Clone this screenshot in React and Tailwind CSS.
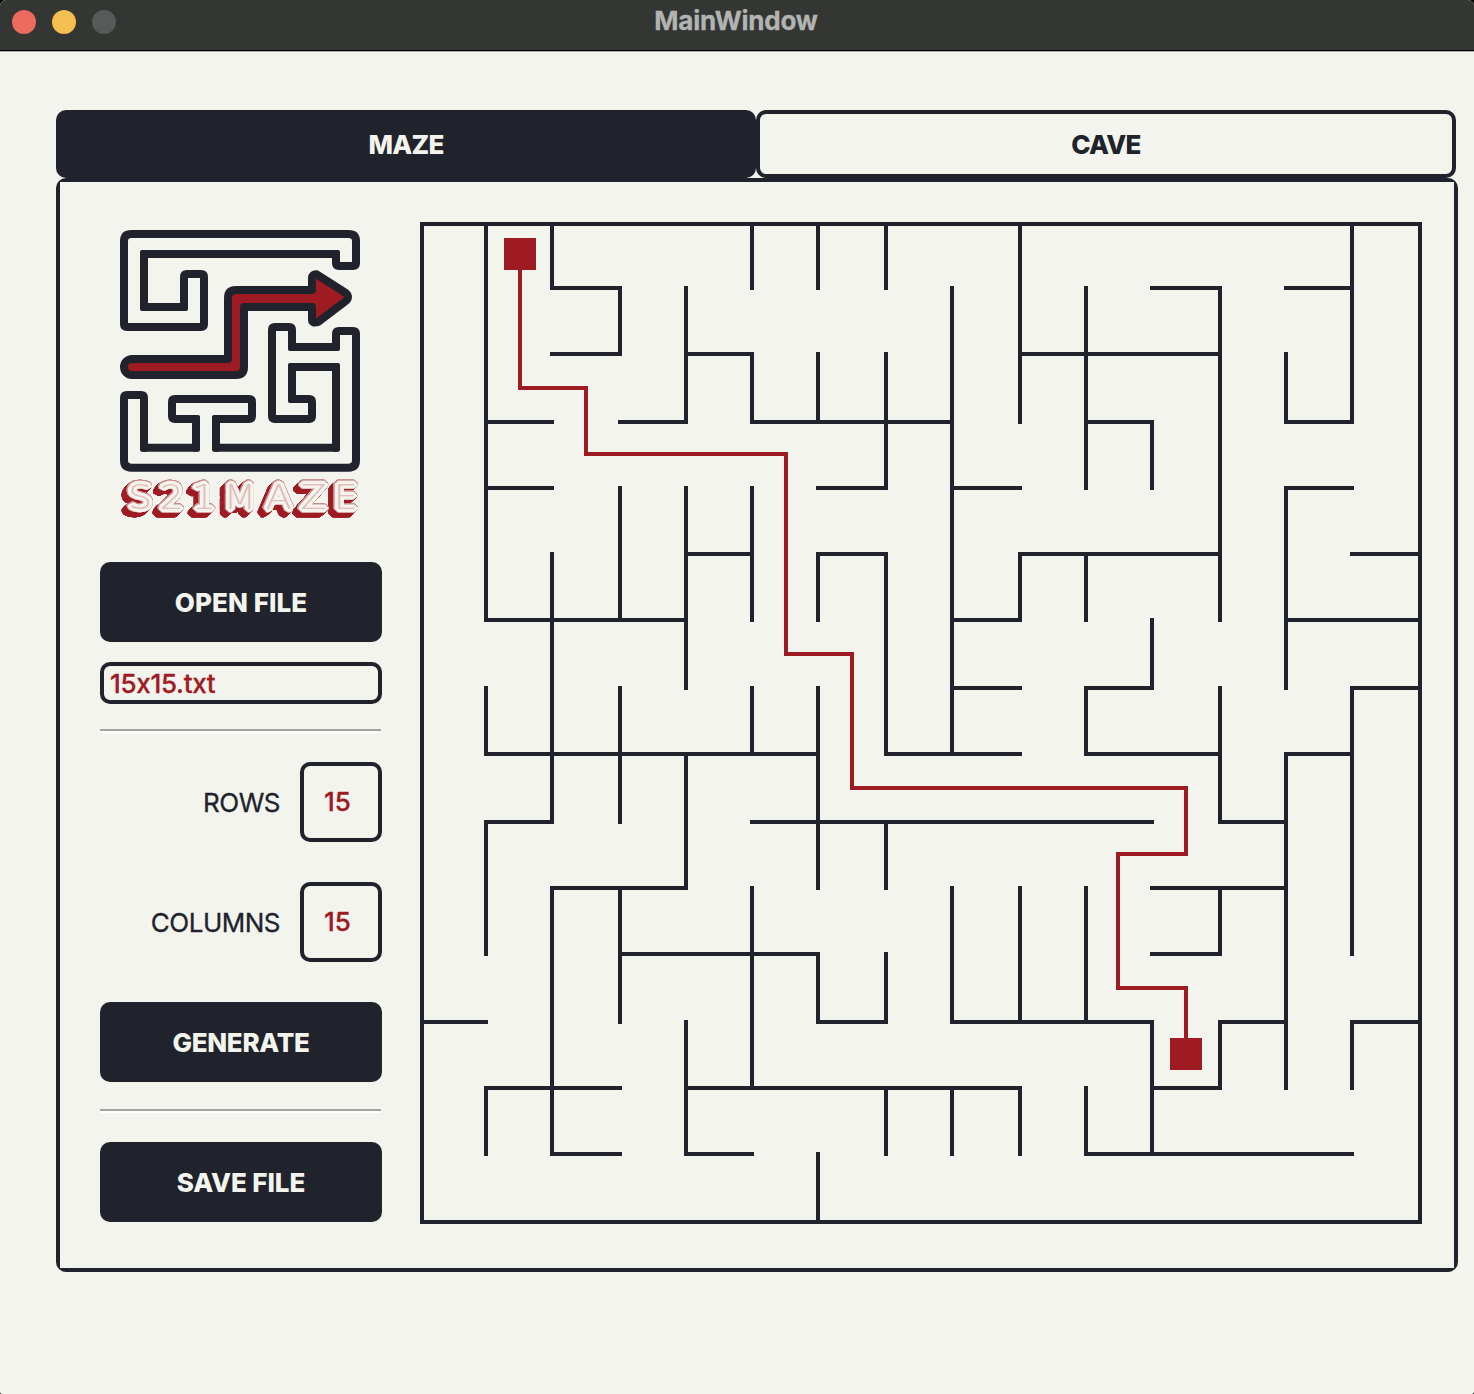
import React from "react";

const COLS = [2, 66, 132, 200, 266, 332, 398, 466, 532, 600, 666, 732, 800, 866, 932, 1000];
const ROWS = [2, 66, 132, 200, 266, 332, 398, 466, 532, 600, 666, 732, 800, 866, 932, 1000];

// For every column line: [from row, to row]
const VERTICAL = [
  [[0, 15]],
  [[0, 6], [7, 8], [9, 11], [13, 14]],
  [[0, 1], [5, 9], [10, 14]],
  [[1, 2], [4, 6], [7, 9], [10, 12]],
  [[1, 3], [4, 7], [8, 10], [12, 14]],
  [[0, 1], [2, 3], [4, 6], [7, 8], [10, 13]],
  [[0, 1], [2, 3], [5, 6], [7, 10], [11, 12], [14, 15]],
  [[0, 1], [2, 4], [5, 8], [9, 10], [11, 12], [13, 14]],
  [[1, 8], [10, 12], [13, 14]],
  [[0, 3], [5, 6], [10, 12], [13, 14]],
  [[1, 4], [5, 6], [7, 8], [10, 12], [13, 14]],
  [[3, 4], [6, 7], [12, 14]],
  [[1, 6], [7, 9], [10, 11], [12, 13]],
  [[2, 3], [4, 7], [8, 13]],
  [[0, 3], [7, 11], [12, 13]],
  [[0, 15]],
];

// For every row line: [from column, to column]
const HORIZONTAL = [
  [[0, 15]],
  [[2, 3], [11, 12], [13, 14]],
  [[2, 3], [4, 5], [9, 12]],
  [[1, 2], [3, 4], [5, 8], [10, 11], [13, 14]],
  [[1, 2], [6, 7], [8, 9], [13, 14]],
  [[4, 5], [6, 7], [9, 12], [14, 15]],
  [[1, 4], [8, 9], [13, 15]],
  [[8, 9], [10, 11], [14, 15]],
  [[1, 6], [7, 9], [10, 12], [13, 14]],
  [[1, 2], [5, 11], [12, 13]],
  [[2, 4], [11, 13]],
  [[3, 6], [11, 12]],
  [[0, 1], [6, 7], [8, 11], [12, 13], [14, 15]],
  [[1, 3], [4, 9], [11, 12]],
  [[2, 3], [4, 5], [10, 14]],
  [[0, 15]],
];

const wallPath =
  VERTICAL.map((runs, i) => runs.map(([a, b]) => `M${COLS[i]} ${ROWS[a]}V${ROWS[b]}`).join("")).join("") +
  HORIZONTAL.map((runs, i) => runs.map(([a, b]) => `M${COLS[a]} ${ROWS[i]}H${COLS[b]}`).join("")).join("");

function Maze() {
  return (
    <svg width="1002" height="1002" viewBox="0 0 1002 1002" className="block shrink-0" shapeRendering="crispEdges">
      <path d={wallPath} fill="none" stroke="#20232b" strokeWidth="4" strokeLinecap="square" />
      <path
        d="M100 32V166H166V232H366V432H432V566H766V632H698V766H766V832"
        fill="none"
        stroke="#9e1b24"
        strokeWidth="4"
      />
      <rect x="84" y="16" width="32" height="32" fill="#9e1b24" />
      <rect x="750" y="816" width="32" height="32" fill="#9e1b24" />
    </svg>
  );
}

// Logo outlines as closed loops of [x, y, corner radius]; radius 0 marks a tight inner corner.
const UPPER_LOOP = [
  [132, 102, 0], [708, 102, 0], [708, 138, 9], [768, 138, 9], [768, 42, 22], [72, 42, 22],
  [72, 321, 9], [312, 321, 9], [312, 162, 9], [252, 162, 9], [252, 261, 0], [132, 261, 0],
];
const LOWER_LOOP = [
  [708, 333, 9], [768, 333, 9], [768, 743, 22], [72, 743, 22], [72, 525, 9], [132, 525, 9],
  [132, 683, 0], [288, 683, 0], [288, 597, 0], [216, 597, 9], [216, 537, 9], [456, 537, 9],
  [456, 597, 9], [348, 597, 0], [348, 683, 0], [708, 683, 0], [708, 441, 0], [576, 441, 0],
  [576, 537, 0], [636, 537, 9], [636, 597, 9], [516, 597, 9], [516, 321, 9], [576, 321, 9],
  [576, 381, 0], [708, 381, 0],
];

function loopPath(points) {
  const towards = ([x, y], [tx, ty], r) => `${x + Math.sign(tx - x) * r} ${y + Math.sign(ty - y) * r}`;
  return (
    points
      .map((p, i) => {
        const prev = points[(i + points.length - 1) % points.length];
        const next = points[(i + 1) % points.length];
        return `${i ? "L" : "M"}${towards(p, prev, p[2])}Q${p[0]} ${p[1]} ${towards(p, next, p[2])}`;
      })
      .join("") + "Z"
  );
}

function Logo() {
  return (
    <div className="h-[292px] w-[240px]">
      <svg width="240" height="242" viewBox="60 30 720 726" className="block">
        <g fill="none" stroke="#20232b" strokeWidth="24" strokeLinejoin="round">
          <path d={loopPath(UPPER_LOOP)} />
          <path d={loopPath(LOWER_LOOP)} />
          <path
            d="M636 210V174Q636 162 650 163L736 218Q752 231 736 244L654 306Q636 312 636 298V261H432V441Q432 465 408 465H96A24 24 0 0 1 96 417H384V234Q384 210 408 210Z"
            fill="#9e1b24"
          />
        </g>
        {[...UPPER_LOOP, ...LOWER_LOOP]
          .filter((p) => p[2] === 0)
          .map(([x, y]) => (
            <rect key={`${x}-${y}`} x={x - 12} y={y - 12} width="24" height="24" rx="6" fill="#20232b" />
          ))}
      </svg>
      <svg
        width="240"
        height="50"
        viewBox="0 0 240 50"
        className="block overflow-visible [filter:drop-shadow(0.5px_0_0_#c98a8a)_drop-shadow(-0.5px_0_0_#c98a8a)_drop-shadow(0_0.5px_0_#c98a8a)_drop-shadow(0_-0.5px_0_#c98a8a)_drop-shadow(-1px_1px_0_#9e1b24)_drop-shadow(-1px_1px_0_#9e1b24)_drop-shadow(-1px_1px_0_#9e1b24)_drop-shadow(-1px_1px_0_#9e1b24)_drop-shadow(-1px_1px_0_#9e1b24)]"
      >
        <text
          transform="scale(1.12 1)"
          x="18 46.4 74.8 107 141.8 172.8 201.6"
          y="37"
          textAnchor="middle"
          fill="#e3bcb9"
          stroke="#f3f4ee"
          strokeWidth="6.5"
          paintOrder="stroke"
          strokeLinejoin="bevel"
          className="font-['DejaVu_Sans',sans-serif] text-[34px] font-extralight"
        >
          S21MAZE
        </text>
      </svg>
    </div>
  );
}

function Button({ children, className }) {
  return (
    <button className="flex h-20 w-[282px] items-center justify-center rounded-[10px] bg-[#20232b] pt-0.5 font-extrabold text-[#f3f4ee]">
      <span className={className}>{children}</span>
    </button>
  );
}

function Divider() {
  return <div className="h-1 w-[281px] border-t-2 border-b-2 border-t-[#a2a39f] border-b-white" />;
}

function SizeField({ label, value }) {
  return (
    <div className="flex h-20 w-[282px] items-center justify-end gap-5">
      <span className="pt-0.5 tracking-[-0.5px] [-webkit-text-stroke:0.3px_#20232b]">{label}</span>
      <div className="flex h-20 w-[82px] items-center justify-center rounded-[10px] border-4 border-[#20232b] pr-[7px] font-medium text-[#9e1b24] [-webkit-text-stroke:0.3px_#9e1b24]">
        {value}
      </div>
    </div>
  );
}

export default function App() {
  return (
    <div className="h-[1394px] w-[1474px] overflow-hidden bg-black font-['Inter',sans-serif] text-[26px] leading-8 text-[#20232b] [font-feature-settings:'calt'_0]">
      <div className="flex h-full flex-col overflow-hidden rounded-t-[6px] rounded-b-[2px] bg-[#f3f4ee]">
        <header className="grid h-[52px] shrink-0 grid-cols-[1fr_auto_1fr] border-b border-[#a9aaa6] bg-[#343634] shadow-[inset_0_-1px_0_#000]">
          <div className="flex gap-4 pt-2.5 pl-3">
            <span className="size-6 rounded-full bg-[#ec6a5e]" />
            <span className="size-6 rounded-full bg-[#f4bf50]" />
            <span className="size-6 rounded-full bg-[#585a59]" />
          </div>
          <h1 className="pt-[5px] pr-0.5 text-[26px] font-bold tracking-[-0.2px] text-[#b2b4b2] [-webkit-text-stroke:0.3px_#b2b4b2]">MainWindow</h1>
        </header>

        <main className="pt-[58px] pl-14">
          <nav className="grid h-[68px] w-[1400px] grid-cols-2 font-extrabold tracking-[-0.7px]">
            <button className="flex items-center justify-center rounded-[10px] bg-[#20232b] pt-0.5 text-[#f3f4ee]">
              <span>MAZE</span>
            </button>
            <button className="flex items-center justify-center rounded-[10px] border-4 border-[#20232b] pt-0.5">
              <span>CAVE</span>
            </button>
          </nav>

          <div className="h-[1094px] w-[1402px] rounded-[10px] bg-[#20232b] p-1">
            <section className="flex h-full gap-[38px] bg-[#f3f4ee] pt-10 pl-10">
              <aside className="flex w-[282px] flex-col">
                <div className="flex justify-center pt-2 pr-0.5">
                  <Logo />
                </div>
                <div className="mt-10 flex flex-col gap-5">
                  <Button className="tracking-[0.1px]">OPEN FILE</Button>
                  <div className="flex h-[42px] w-[282px] items-center rounded-[10px] border-4 border-[#20232b] pt-0.5 pl-1.5 font-medium tracking-[-0.3px] text-[#9e1b24] [-webkit-text-stroke:0.3px_#9e1b24]">
                    <span>15x15.txt</span>
                  </div>
                </div>
                <div className="pt-[25px] pb-[29px]">
                  <Divider />
                </div>
                <div className="flex flex-col gap-10">
                  <SizeField label="ROWS" value="15" />
                  <SizeField label="COLUMNS" value="15" />
                  <Button className="tracking-[-0.3px]">GENERATE</Button>
                </div>
                <div className="pt-[27px] pb-[29px]">
                  <Divider />
                </div>
                <Button className="tracking-[-0.1px]">SAVE FILE</Button>
              </aside>
              <Maze />
            </section>
          </div>
        </main>
      </div>
    </div>
  );
}
